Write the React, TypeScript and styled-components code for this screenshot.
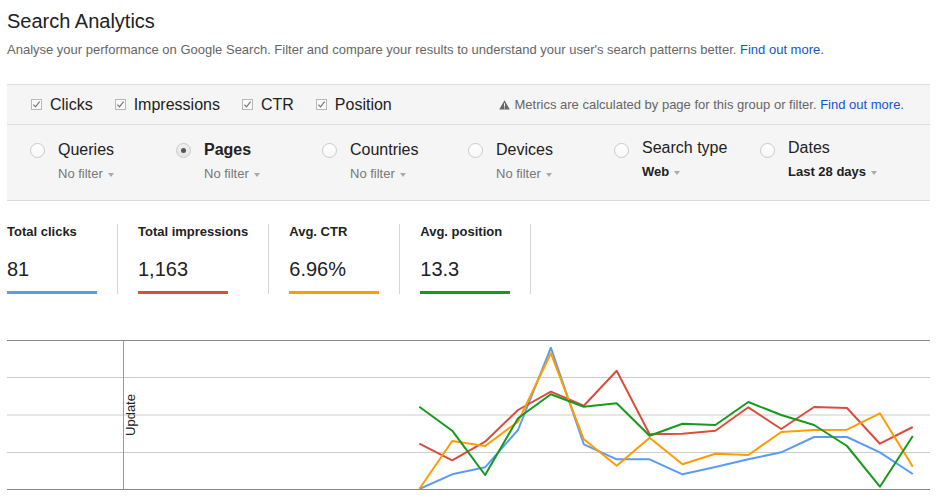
import React from "react";
import styled, { createGlobalStyle } from "styled-components";

const GlobalStyle = createGlobalStyle`
  html, body { margin: 0; padding: 0; background: #fff; }
  body { font-family: "Liberation Sans", Arial, sans-serif; color: #222; }
`;

const Page = styled.div`
  width: 923px;
  padding: 0 7px;
`;

const Title = styled.h1`
  margin: 9px 0 0;
  font-size: 20px;
  line-height: 24px;
  font-weight: normal;
  color: #222;
`;

const Description = styled.p`
  margin: 9px 0 0;
  font-size: 13px;
  line-height: 16px;
  color: #666;
`;

const Link = styled.a`
  color: #1155cc;
  text-decoration: none;
`;

const Panel = styled.div`
  margin-top: 26px;
  background: #f5f5f5;
  border-top: 1px solid #dcdcdc;
  border-bottom: 1px solid #dcdcdc;
`;

const MetricsBar = styled.div`
  height: 39px;
  display: flex;
  align-items: center;
  padding: 0 26px 0 24px;
  border-bottom: 1px solid #dcdcdc;
`;

const CheckItem = styled.label`
  display: flex;
  align-items: center;
  font-size: 16px;
  line-height: 20px;
  color: #222;
  margin-right: 22px;
`;

const CheckBox = styled.svg`
  width: 11px;
  height: 11px;
  margin-right: 8px;
  flex: none;
`;

const Notice = styled.div`
  margin-left: auto;
  display: flex;
  align-items: center;
  font-size: 13px;
  line-height: 16px;
  color: #666;
`;

const WarnIcon = styled.svg`
  width: 11px;
  height: 10px;
  margin-right: 5px;
`;

const DimensionRow = styled.div`
  height: 75px;
  display: flex;
  padding: 15px 0 0 23px;
  box-sizing: border-box;
`;

const Dimension = styled.div`
  width: 146px;
  display: flex;
  align-items: flex-start;
`;

const Radio = styled.span<{ $checked?: boolean }>`
  position: relative;
  flex: none;
  width: 13px;
  height: 13px;
  margin: 3px 13px 0 0;
  border-radius: 50%;
  border: 1px solid #cacaca;
  background: ${(p) => (p.$checked ? "linear-gradient(#f0f0f0, #e4e4e4)" : "linear-gradient(#ffffff, #f7f7f7)")};
  &::after {
    content: "";
    display: ${(p) => (p.$checked ? "block" : "none")};
    position: absolute;
    left: 4px;
    top: 4px;
    width: 5px;
    height: 5px;
    border-radius: 50%;
    background: #555;
  }
`;

const DimText = styled.div<{ $raised?: boolean }>`
  display: flex;
  flex-direction: column;
  margin-top: ${(p) => (p.$raised ? "-2px" : "0")};
`;

const DimLabel = styled.div<{ $bold?: boolean }>`
  font-size: 16px;
  line-height: 20px;
  font-weight: ${(p) => (p.$bold ? "bold" : "normal")};
  color: #222;
`;

const DimFilter = styled.div<{ $active?: boolean }>`
  margin-top: 6px;
  display: flex;
  align-items: center;
  font-size: 13px;
  line-height: 16px;
  font-weight: ${(p) => (p.$active ? "bold" : "normal")};
  color: ${(p) => (p.$active ? "#222" : "#777")};
`;

const Caret = styled.span`
  width: 0;
  height: 0;
  margin: 1px 0 0 5px;
  border-left: 3.5px solid transparent;
  border-right: 3.5px solid transparent;
  border-top: 4px solid #aaa;
`;

const Scorecards = styled.div`
  margin-top: 23px;
  display: flex;
`;

const Scorecard = styled.div<{ $first?: boolean }>`
  display: flex;
  flex-direction: column;
  min-width: 90px;
  padding: 0 20px 0 ${(p) => (p.$first ? "0" : "20px")};
  border-right: 1px solid #d6d6d6;
`;

const ScoreLabel = styled.div`
  font-size: 13px;
  line-height: 16px;
  font-weight: bold;
  color: #222;
  white-space: nowrap;
`;

const ScoreValue = styled.div`
  margin-top: 17px;
  font-size: 20px;
  line-height: 24px;
  color: #222;
`;

const ScoreBar = styled.div<{ $color: string }>`
  margin-top: 10px;
  width: 90px;
  height: 3px;
  background: ${(p) => p.$color};
`;

const ChartBox = styled.div`
  margin-top: 44px;
  height: 154px;
`;

const xs = Array.from({ length: 16 }, (_, i) => 419.3 + 32.9 * i);

const series: { color: string; ys: number[] }[] = [
  { color: "#5b9bf8", ys: [489, 474.3, 467.3, 430, 347.7, 444.3, 459.3, 459.3, 474.3, 467, 459.3, 452.3, 437, 437, 452.3, 474] },
  { color: "#dc4c3c", ys: [443.7, 460.3, 441.7, 410, 391.7, 405.7, 370.7, 434.3, 433.7, 430.7, 407.3, 429, 407, 408, 443.7, 427] },
  { color: "#ff9c00", ys: [489, 441, 446, 421.7, 353.3, 439.3, 465.7, 437.7, 464.3, 453.7, 455, 432, 430, 429.7, 413.3, 466.7] },
  { color: "#159a1c", ys: [406.7, 430.7, 475, 418.3, 394.3, 406.7, 403.3, 435.7, 423.7, 425, 402, 415, 425, 446, 486.7, 436] },
];

const Chart = () => (
  <svg width="923" height="154" viewBox="7 338 923 154">
    <line x1="7" x2="930" y1="377.5" y2="377.5" stroke="#cccccc" strokeWidth="1" />
    <line x1="7" x2="930" y1="415" y2="415" stroke="#cccccc" strokeWidth="1" />
    <line x1="7" x2="930" y1="452.5" y2="452.5" stroke="#cccccc" strokeWidth="1" />
    <line x1="123.5" x2="123.5" y1="340" y2="489" stroke="#9a9a9a" strokeWidth="1" />
    <text
      transform="translate(134.5,415) rotate(-90)"
      textAnchor="middle"
      fontFamily="Liberation Sans, Arial, sans-serif"
      fontSize="13"
      fill="#222"
    >
      Update
    </text>
    {series.map((s) => (
      <polyline
        key={s.color}
        points={s.ys.map((y, i) => `${xs[i].toFixed(1)},${y}`).join(" ")}
        fill="none"
        stroke={s.color}
        strokeWidth="2"
        strokeLinejoin="round"
      />
    ))}
    <line x1="7" x2="930" y1="340.5" y2="340.5" stroke="#888888" strokeWidth="1" />
    <line x1="7" x2="930" y1="489.5" y2="489.5" stroke="#888888" strokeWidth="1" />
  </svg>
);

const Check = () => (
  <CheckBox viewBox="0 0 11 11">
    <rect x="0.5" y="0.5" width="10" height="10" fill="#fafafa" stroke="#b8b8b8" />
    <path d="M2.4 5.6 L4.5 7.8 L8.6 2.6" fill="none" stroke="#777" strokeWidth="1.2" />
  </CheckBox>
);

const metrics = ["Clicks", "Impressions", "CTR", "Position"];

const dimensions = [
  { label: "Queries", filter: "No filter" },
  { label: "Pages", filter: "No filter", checked: true },
  { label: "Countries", filter: "No filter" },
  { label: "Devices", filter: "No filter" },
  { label: "Search type", filter: "Web", active: true },
  { label: "Dates", filter: "Last 28 days", active: true },
];

const scores = [
  { label: "Total clicks", value: "81", color: "#5b9bf8" },
  { label: "Total impressions", value: "1,163", color: "#dc4c3c" },
  { label: "Avg. CTR", value: "6.96%", color: "#ff9c00" },
  { label: "Avg. position", value: "13.3", color: "#159a1c" },
];

export default function App() {
  return (
    <>
      <GlobalStyle />
      <Page>
        <Title>Search Analytics</Title>
        <Description>
          Analyse your performance on Google Search. Filter and compare your results to understand your user's search
          patterns better. <Link href="#">Find out more.</Link>
        </Description>
        <Panel>
          <MetricsBar>
            {metrics.map((m) => (
              <CheckItem key={m}>
                <Check />
                {m}
              </CheckItem>
            ))}
            <Notice>
              <WarnIcon viewBox="0 0 11 10">
                <path d="M5.5 0.3 L10.8 9.6 L0.2 9.6 Z" fill="#666" />
                <rect x="5" y="3.2" width="1" height="3.4" fill="#f5f5f5" />
                <rect x="5" y="7.4" width="1" height="1.1" fill="#f5f5f5" />
              </WarnIcon>
              Metrics are calculated by page for this group or filter.&nbsp;<Link href="#">Find out more.</Link>
            </Notice>
          </MetricsBar>
          <DimensionRow>
            {dimensions.map((d) => (
              <Dimension key={d.label}>
                <Radio $checked={d.checked} />
                <DimText $raised={d.active}>
                  <DimLabel $bold={d.checked}>{d.label}</DimLabel>
                  <DimFilter $active={d.active}>
                    {d.filter}
                    <Caret />
                  </DimFilter>
                </DimText>
              </Dimension>
            ))}
          </DimensionRow>
        </Panel>
        <Scorecards>
          {scores.map((s, i) => (
            <Scorecard key={s.label} $first={i === 0}>
              <ScoreLabel>{s.label}</ScoreLabel>
              <ScoreValue>{s.value}</ScoreValue>
              <ScoreBar $color={s.color} />
            </Scorecard>
          ))}
        </Scorecards>
        <ChartBox>
          <Chart />
        </ChartBox>
      </Page>
    </>
  );
}
